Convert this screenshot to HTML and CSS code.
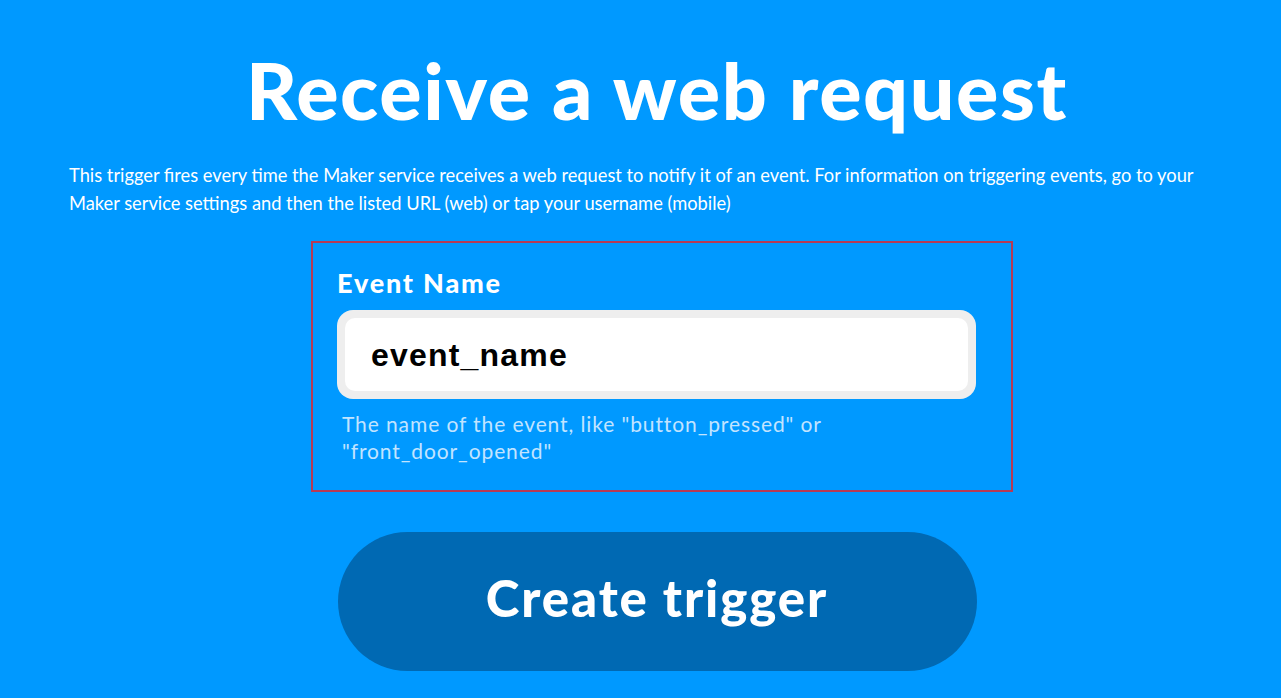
FILE: index.html
```html
<!DOCTYPE html>
<html>
<head>
<meta charset="utf-8">
<link rel="stylesheet" href="styles.css">
</head>
<body>
<main class="page">
  <h1 class="title">Receive a web request</h1>
  <p class="desc">This trigger fires every time the Maker service receives a web request to notify it of an event. For information on triggering events, go to your Maker service settings and then the listed URL (web) or tap your username (mobile)</p>
  <section class="field-box">
    <label class="field-label">Event Name</label>
    <div class="input-wrap">
      <div class="input">event_name</div>
    </div>
    <p class="help">The name of the event, like "button_pressed" or "front_door_opened"</p>
  </section>
  <button class="create">Create trigger</button>
</main>
</body>
</html>
```

FILE: styles.css
```css
html, body {
  margin: 0;
  padding: 0;
  background: #0099ff;
  height: 100%;
  overflow: hidden;
}
.page {
  margin-left: 69px;
  width: 1176px;
  display: flex;
  flex-direction: column;
  align-items: center;
  font-family: Lato, "Liberation Sans", sans-serif;
  color: #fff;
}
.title {
  margin: 40px 0 0 0;
  font-family: Lato, sans-serif;
  font-weight: 900;
  font-size: 79px;
  line-height: 100px;
  letter-spacing: 1.6px;
}
.desc {
  align-self: stretch;
  margin: 21px 40px 0 0;
  font-size: 18.3px;
  line-height: 28px;
  font-weight: 400;
}
.field-box {
  margin: 24px 0 0 10px;
  border: 2px solid #b83a55;
  padding: 25px 35px 26px 24px;
  width: 639px;
  display: flex;
  flex-direction: column;
}
.field-label {
  font-weight: 900;
  font-size: 27px;
  line-height: 30px;
  letter-spacing: 1.8px;
}
.input-wrap {
  margin-top: 12px;
  background: #eeeeee;
  border-radius: 16px;
  padding: 8px;
  height: 73px;
}
.input {
  background: #fff;
  border-radius: 10px;
  height: 73px;
  box-sizing: border-box;
  padding-left: 26px;
  padding-top: 2px;
  display: flex;
  align-items: center;
  color: #000;
  font-family: "Liberation Sans", Arial, sans-serif;
  font-weight: 700;
  font-size: 32px;
  letter-spacing: 1.2px;
}
.help {
  margin: 11px 0 0 5px;
  color: #c2e4ff;
  font-size: 21px;
  line-height: 27px;
  font-weight: 400;
  letter-spacing: 0.9px;
}
.create {
  margin-top: 40px;
  width: 639px;
  height: 139px;
  border: none;
  border-radius: 70px;
  background: #0069b3;
  color: #fff;
  font-family: Lato, sans-serif;
  font-weight: 900;
  font-size: 51px;
  letter-spacing: 1.9px;
  padding: 0 0 8px 0;
}
```
